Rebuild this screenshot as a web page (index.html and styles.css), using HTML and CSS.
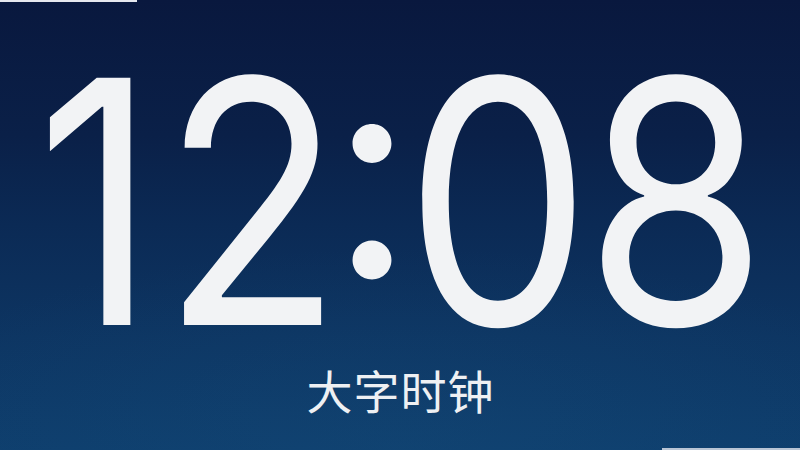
FILE: index.html
```html
<!DOCTYPE html>
<html lang="zh-CN">
<head>
<meta charset="utf-8">
<title>大字时钟</title>
<link rel="stylesheet" href="styles.css">
</head>
<body>
<main class="screen">
  <div class="clock">
    <span class="ch ch-1">1</span><span class="ch ch-2">2</span><span class="ch ch-colon">:</span><span class="ch ch-0">0</span><span class="ch ch-8">8</span>
  </div>
  <div class="caption">大字时钟</div>
</main>
</body>
</html>
```

FILE: styles.css
```css
html, body {
  margin: 0;
  padding: 0;
  width: 800px;
  height: 450px;
  overflow: hidden;
}

.screen {
  width: 800px;
  height: 450px;
  display: flex;
  flex-direction: column;
  align-items: center;
  box-sizing: border-box;
  padding-top: 52px;
  background:
    linear-gradient(#e6e8ee, #e6e8ee) left top / 137px 2px no-repeat,
    linear-gradient(#b9c5d5, #b9c5d5) right bottom / 138px 2px no-repeat,
    radial-gradient(ellipse 70% 45% at 50% 100%, rgba(22, 78, 124, 0.3), rgba(22, 78, 124, 0) 100%),
    linear-gradient(180deg, #09183e 0%, #0a2048 30%, #0b2a55 50%, #0d3562 75%, #0e3e6d 100%);
  color: #f2f3f5;
}

.clock {
  display: flex;
  padding-right: 22px;
  font-family: Inter, "Liberation Sans", sans-serif;
  font-weight: 400;
  font-size: 340px;
  line-height: 300px;
  white-space: nowrap;
}

.ch {
  display: flex;
  justify-content: center;
  box-sizing: border-box;
  transform: scaleX(0.87);
}

.ch-1 {
  width: 160px;
  padding-left: 12px;
}
.ch-2 { width: 162px; }
.ch-colon {
  width: 78px;
  font-size: 295px;
  transform: none;
  font-feature-settings: "case" 1;
}
.ch-0 { width: 174px; }
.ch-8 { width: 182px; }

.caption {
  margin-top: 14px;
  font-family: "Noto Sans CJK SC", "Noto Sans", sans-serif;
  font-size: 46px;
  line-height: 46px;
  letter-spacing: 1px;
  margin-right: -1px;
  color: #eef0f3;
}
```
